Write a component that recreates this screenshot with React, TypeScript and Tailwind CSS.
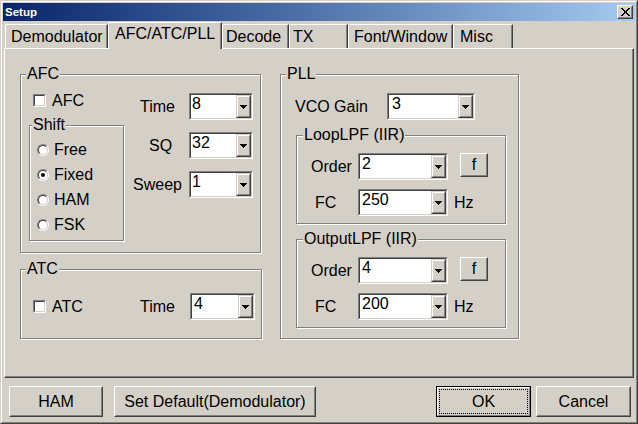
import type React from "react"

// Win2000 classic palette
const FACE = "bg-[#d4d0c8]"

function PushButton({ className = "", children }: { className?: string; children: React.ReactNode }) {
  return (
    <div className={`border border-t-white border-l-white border-r-[#404040] border-b-[#404040] ${FACE} ${className}`}>
      <div className="flex h-full w-full items-center justify-center border border-t-[#d4d0c8] border-l-[#d4d0c8] border-r-[#808080] border-b-[#808080]">
        {children}
      </div>
    </div>
  )
}

function Arrow() {
  return (
    <svg width="7" height="4" viewBox="0 0 7 4" shapeRendering="crispEdges">
      <rect x="0" y="0" width="7" height="1" />
      <rect x="1" y="1" width="5" height="1" />
      <rect x="2" y="2" width="3" height="1" />
      <rect x="3" y="3" width="1" height="1" />
    </svg>
  )
}

const closeRows = ["XX.....XX", ".XX...XX.", "..XX.XX..", "...XXX...", "...XXX...", "..XX.XX..", ".XX...XX.", "XX.....XX"]

function CloseGlyph() {
  return (
    <svg width="9" height="8" viewBox="0 0 9 8" shapeRendering="crispEdges">
      {closeRows.map((row, y) =>
        row.split("").map((c, x) => (c === "X" ? <rect key={`${x}-${y}`} x={x} y={y} width="1" height="1" /> : null))
      )}
    </svg>
  )
}

function Combo({ value, className, pad }: { value: string; className: string; pad: string }) {
  return (
    <div className={`flex h-[27px] border border-t-[#808080] border-l-[#808080] border-r-white border-b-white ${className}`}>
      <div className="flex flex-1 border border-t-[#404040] border-l-[#404040] border-r-[#d4d0c8] border-b-[#d4d0c8] bg-white">
        <span className={`flex-1 leading-[18px] ${pad}`}>{value}</span>
        <div className="h-full w-[15px] border border-t-[#d4d0c8] border-l-[#d4d0c8] border-r-[#404040] border-b-[#404040]">
          <div className={`flex h-full items-center justify-center border border-t-white border-l-white border-r-[#808080] border-b-[#808080] ${FACE}`}>
            <Arrow />
          </div>
        </div>
      </div>
    </div>
  )
}

function Check() {
  return (
    <div className="h-[13px] w-[13px] border border-t-[#808080] border-l-[#808080] border-r-white border-b-white">
      <div className="h-full w-full border border-t-[#404040] border-l-[#404040] border-r-[#d4d0c8] border-b-[#d4d0c8] bg-white" />
    </div>
  )
}

function Radio({ checked = false }: { checked?: boolean }) {
  return (
    <div className="h-[12px] w-[12px] rounded-full border border-t-[#808080] border-l-[#808080] border-r-white border-b-white">
      <div className="flex h-full w-full items-center justify-center rounded-full border border-t-[#404040] border-l-[#404040] border-r-[#d4d0c8] border-b-[#d4d0c8] bg-white">
        {checked && <div className="h-[4px] w-[4px] rounded-full bg-black" />}
      </div>
    </div>
  )
}

function Group({
  label,
  labelLeft,
  className,
  children,
}: {
  label: string
  labelLeft: string
  className: string
  children?: React.ReactNode
}) {
  return (
    <div className={`relative border border-[#808080] shadow-[inset_1px_1px_0_#fff,1px_1px_0_#fff] ${className}`}>
      <span className={`absolute -top-[10px] ${labelLeft} ${FACE} px-px leading-[18px]`}>{label}</span>
      {children}
    </div>
  )
}

const tabs = [
  { label: "Demodulator", w: "w-[103px]", pl: "pl-[5px]" },
  { label: "AFC/ATC/PLL", w: "w-[114px]", pl: "pl-[6px]", active: true },
  { label: "Decode", w: "w-[67px]", pl: "pl-[3px]" },
  { label: "TX", w: "w-[59px]", pl: "pl-[3px]" },
  { label: "Font/Window", w: "w-[105px]", pl: "pl-[5px]" },
  { label: "Misc", w: "w-[60px]", pl: "pl-[6px]" },
]

function FilterGroup({ label, order, fc }: { label: string; order: string; fc: string }) {
  return (
    <Group label={label} labelLeft="left-[6px]" className="ml-[15px] mt-[15px] h-[89px] w-[210px]">
      <div className="flex flex-col pt-[17px]">
        <div className="flex h-[27px] items-start">
          <span className="w-[61px] self-center pl-[14px]">Order</span>
          <Combo value={order} className="w-[90px]" pad="pl-[2px]" />
          <PushButton className="ml-[12px] h-[24px] w-[28px]">f</PushButton>
        </div>
        <div className="mt-[9px] flex h-[27px] items-center">
          <span className="w-[61px] pl-[18px]">FC</span>
          <Combo value={fc} className="w-[90px]" pad="pl-[2px]" />
          <span className="ml-[6px]">Hz</span>
        </div>
      </div>
    </Group>
  )
}

export default function App() {
  return (
    <div className="h-[424px] w-[638px] border border-t-[#d4d0c8] border-l-[#d4d0c8] border-r-[#404040] border-b-[#404040] bg-[#d4d0c8] font-['Liberation_Sans',Arial,sans-serif] text-[16px] leading-[18px] text-black">
      <div className="flex h-full w-full flex-col border border-t-white border-l-white border-r-[#808080] border-b-[#808080] p-px">
        {/* Title bar */}
        <div className="flex h-[18px] items-center bg-linear-to-r from-[#0a246a] to-[#a6caf0] pl-[2px] pr-[2px]">
          <span className="text-[11.5px] font-bold leading-[18px] text-white">Setup</span>
          <PushButton className="ml-auto h-[14px] w-[16px]">
            <CloseGlyph />
          </PushButton>
        </div>

        {/* Tabs */}
        <div className="ml-[2px] mt-px flex h-[26px] items-end">
          {tabs.map((t) =>
            t.active ? (
              <div
                key={t.label}
                className={`relative z-10 -mb-px h-[27px] ${t.w} ${t.pl} rounded-tl-[2px] border-l border-t border-r border-l-white border-t-white border-r-[#404040] pt-[2px] shadow-[inset_-1px_0_0_#808080] ${FACE}`}
              >
                {t.label}
              </div>
            ) : (
              <div
                key={t.label}
                className={`h-[24px] ${t.w} ${t.pl} rounded-tl-[2px] border-l border-t border-r border-l-white border-t-white border-r-[#404040] pt-[3px] shadow-[inset_-1px_0_0_#808080]`}
              >
                {t.label}
              </div>
            )
          )}
        </div>

        {/* Tab page */}
        <div className="ml-px flex h-[330px] w-[630px] border border-t-white border-l-white border-r-[#404040] border-b-[#404040] pl-[15px] pt-[25px] shadow-[inset_-1px_-1px_0_#808080]">
          <div className="flex w-[242px] flex-col">
            <Group label="AFC" labelLeft="left-[5px]" className="h-[179px] w-[241px]">
              <div className="flex pl-[8px] pt-[18px]">
                <div className="flex w-[95px] flex-col">
                  <div className="mt-px flex h-[13px] items-center pl-[4px]">
                    <Check />
                    <span className="ml-[6px]">AFC</span>
                  </div>
                  <Group label="Shift" labelLeft="left-[2px]" className="mt-[18px] h-[116px] w-[95px]">
                    <div className="flex flex-col gap-[13px] pl-[7px] pt-[18px]">
                      {["Free", "Fixed", "HAM", "FSK"].map((s) => (
                        <div key={s} className="flex h-[12px] items-center">
                          <Radio checked={s === "Fixed"} />
                          <span className="ml-[5px]">{s}</span>
                        </div>
                      ))}
                    </div>
                  </Group>
                </div>
                <div className="ml-[9px] flex flex-col gap-[12px]">
                  <div className="flex h-[27px] items-center">
                    <span className="w-[56px] pl-[7px]">Time</span>
                    <Combo value="8" className="w-[64px]" pad="pl-px" />
                  </div>
                  <div className="flex h-[27px] items-center">
                    <span className="w-[56px] pl-[16px]">SQ</span>
                    <Combo value="32" className="w-[64px]" pad="pl-px" />
                  </div>
                  <div className="flex h-[27px] items-center">
                    <span className="w-[56px]">Sweep</span>
                    <Combo value="1" className="w-[64px]" pad="pl-px" />
                  </div>
                </div>
              </div>
            </Group>

            <Group label="ATC" labelLeft="left-[5px]" className="mt-[16px] h-[70px] w-[242px]">
              <div className="mt-[23px] flex h-[27px] items-center">
                <div className="flex w-[119px] items-center pl-[12px]">
                  <Check />
                  <span className="ml-[6px]">ATC</span>
                </div>
                <span className="w-[50px]">Time</span>
                <Combo value="4" className="w-[65px]" pad="pl-[2px]" />
              </div>
            </Group>
          </div>

          <Group label="PLL" labelLeft="left-[5px]" className="ml-[18px] h-[265px] w-[239px]">
            <div className="flex flex-col pt-[18px]">
              <div className="flex h-[27px] items-center">
                <span className="w-[106px] pl-[14px]">VCO Gain</span>
                <Combo value="3" className="w-[88px]" pad="pl-[3px]" />
              </div>
              <FilterGroup label="LoopLPF (IIR)" order="2" fc="250" />
              <FilterGroup label="OutputLPF (IIR)" order="4" fc="200" />
            </div>
          </Group>
        </div>

        {/* Bottom buttons */}
        <div className="mt-[8px] flex h-[31px] pr-[4px]">
          <PushButton className="ml-[6px] h-[31px] w-[94px]">HAM</PushButton>
          <PushButton className="ml-[11px] h-[31px] w-[202px]">Set Default(Demodulator)</PushButton>
          <div className="ml-auto h-[31px] w-[95px] border border-black">
            <div className="h-full w-full border border-t-white border-l-white border-r-[#808080] border-b-[#808080] p-px">
              <div className="flex h-full w-full items-center justify-center border border-dotted border-black">OK</div>
            </div>
          </div>
          <PushButton className="ml-[5px] h-[31px] w-[95px]">Cancel</PushButton>
        </div>
      </div>
    </div>
  )
}
